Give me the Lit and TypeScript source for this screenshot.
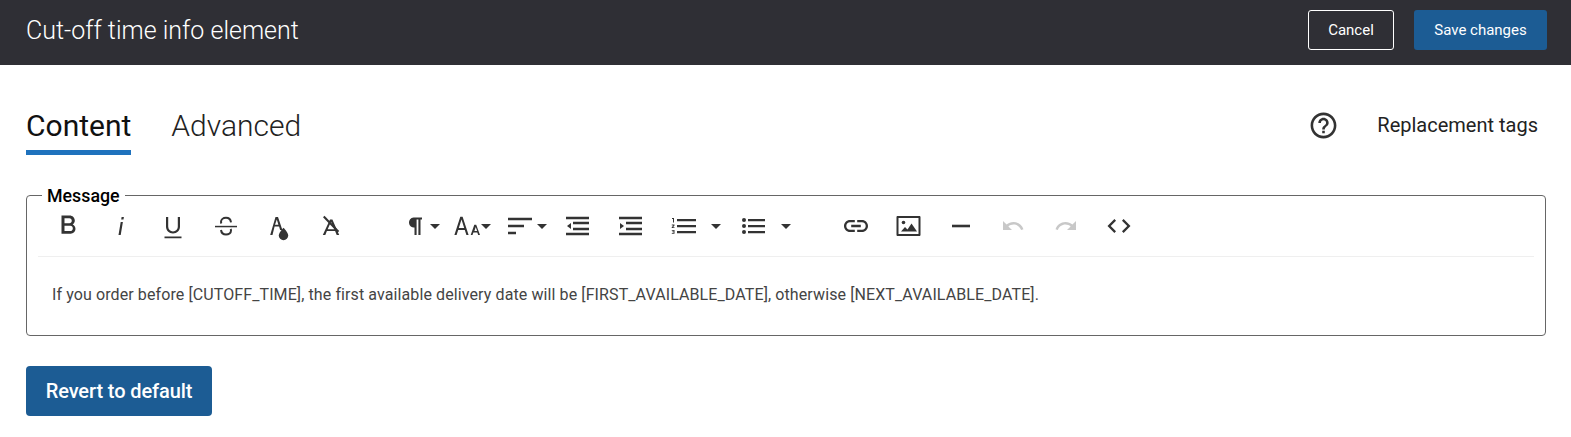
import { LitElement, html, css, svg } from "lit";
import { customElement } from "lit/decorators.js";

const icon = (body: unknown) => html`<svg class="ic" viewBox="0 0 24 24" width="24" height="24">${body}</svg>`;
const caret = html`<svg class="caret" viewBox="0 0 10 5" width="10" height="5"><path d="M0 0h10L5 5z"/></svg>`;

const icons: Record<string, unknown> = {
  bold: svg`<g transform="translate(-3.600 -3.600) scale(1.300)"><path d="M15.6 10.79c.97-.67 1.65-1.77 1.65-2.79 0-2.26-1.75-4-4-4H7v14h7.04c2.09 0 3.71-1.7 3.71-3.79 0-1.52-.86-2.82-2.15-3.42zM9.300 6.100h3.800c1 0 1.800.8 1.800 1.850s-.8 1.850-1.800 1.850H9.300zm4.500 9.800H9.300v-4h4.500c1.100 0 1.900.9 1.900 2s-.8 2-1.900 2z"/></g>`,
  italic: svg`<path d="M11.700 8h2.200l-2.200 13H9.500zM12.600 3h2.300l-.4 2.400h-2.300z"/>`,
  underline: svg`<path d="M12 19.600c4.100 0 7-2.900 7-7V3h-2.200v9.600c0 2.800-2 4.800-4.800 4.800s-4.800-2-4.800-4.800V3H5v9.600c0 4.100 2.900 7 7 7zM3.500 22.400v1.800h17v-1.800z"/>`,
  strike: svg`<path d="M1 11.800h22v1.500H1z"/><path d="M17 8.300C16.600 5.300 14.700 3.800 12 3.800c-2.900 0-5 1.700-5 4 0 .6.100 1.100.400 1.600M7 16c.4 3 2.300 4.500 5 4.500 2.900 0 5-1.700 5-4 0-.6-.1-1.100-.4-1.600" fill="none" stroke="#333" stroke-width="2"/>`,
  color: svg`<path d="M9.500 3h2.500l4.400 13h-2.300l-1-3.400H8.600l-2.100 8.400H4.200zm-.5 7.800h3.400L10.800 5.600z"/><path d="M17.500 13.800s4.700 4.800 4.700 7.700a4.700 4.700 0 0 1-9.400 0c0-2.900 4.700-7.700 4.700-7.700z"/>`,
  clear: svg`<path d="M11 5.500h2.400L20.200 21h-2.500l-1.600-3.900H7.900L6.300 21H3.800zm-2.300 9.800h6.600L12 7.800z"/><path d="M4 3.300l1.500-1.500L20.200 17l-1.500 1.500z"/>`,
  para: svg`<path d="M10.500 3.500h8.500v1.900h-1.500v15.600h-2.100V5.400h-1.800v15.600h-2.100v-7.500a5 5 0 0 1-1-10z"/>`,
  size: svg`<path d="M7.300 2.700h2.300l6 18.300h-2.200l-1.600-5.100H5.200L3.600 21H1.400zm-1.500 11.400h5.400L8.500 5.600z"/><path d="M21.300 10.800h1.900l3.800 10.200h-1.800l-.9-2.600h-3.900l-.9 2.600h-1.800zm.1 6.100h2.700l-1.350-4z"/>`,
  align: svg`<path d="M1 3.800h24v2.400H1zM1 10.800h16v2.400H1zM1 17.800h8v2.400H1z"/>`,
  outdent: svg`<path d="M1 2.800h23v2.400H1zM1 18.800h23v2.400H1zM8 7.800h16v2.400H8zM8 13.800h16v2.400H8z"/><path d="M6 9v6l-4-3z"/>`,
  indent: svg`<path d="M1 2.800h23v2.400H1zM1 18.800h23v2.400H1zM8 7.800h16v2.400H8zM8 13.800h16v2.400H8z"/><path d="M2 9v6l4-3z"/>`,
  ol: svg`<path d="M6 5h19v2.200H6zM6 11h19v2.200H6zM6 17h19v2.200H6z"/><path d="M1 4h2v4.500H2V5H1zM.8 10.500h2.700v.9L2 13.200h1.500v.9H.7v-.8L2.400 11.400H.8zM.8 16h2.700v3.800H.8V19h1.800v-.7H1.300v-.7h1.300v-.8H.8z"/>`,
  ul: svg`<circle cx="3" cy="6" r="2"/><circle cx="3" cy="12" r="2"/><circle cx="3" cy="18" r="2"/><path d="M7 5h17v2.200H7zM7 11h17v2.200H7zM7 17h17v2.200H7z"/>`,
  link: svg`<g transform="translate(-2.400 -2.400) scale(1.200)"><path d="M3.900 12c0-1.710 1.390-3.100 3.100-3.100h4V7H7c-2.760 0-5 2.240-5 5s2.240 5 5 5h4v-1.900H7c-1.710 0-3.100-1.390-3.100-3.100zM8 13h8v-2H8zm9-6h-4v1.900h4c1.710 0 3.100 1.390 3.100 3.100s-1.390 3.100-3.100 3.100h-4V17h4c2.760 0 5-2.240 5-5s-2.240-5-5-5z"/></g>`,
  image: svg`<path fill-rule="evenodd" d="M1.500 2h22c.5 0 1 .5 1 1v18c0 .5-.5 1-1 1h-22c-.5 0-1-.5-1-1V3c0-.5.5-1 1-1zm1 2.100v15.800h20V4.100z"/><circle cx="7.500" cy="8.500" r="1.800"/><path d="M5 17.500l4-4.500 2.500 2.500 4-6 5.500 8z"/>`,
  hr: svg`<path d="M3 10.700h18v2.600H3z"/>`,
  undo: svg`<path class="off" d="M12.500 8c-2.650 0-5.050 1-6.900 2.600L2 7v9h9l-3.620-3.620c1.390-1.160 3.160-1.880 5.120-1.880 3.540 0 6.550 2.310 7.600 5.500l2.370-.78C21.080 11.030 17.150 8 12.500 8z"/>`,
  redo: svg`<path class="off" d="M18.400 10.600C16.550 9 14.150 8 11.500 8c-4.650 0-8.580 3.030-9.960 7.220L3.900 16c1.050-3.190 4.050-5.500 7.600-5.500 1.950 0 3.730.72 5.120 1.880L13 16h9V7z"/>`,
  code: svg`<g transform="translate(-1.800 -1.800) scale(1.150)"><path d="M9.400 16.600L4.800 12l4.600-4.600L8 6l-6 6 6 6zM14.600 16.600l4.600-4.600-4.600-4.600L16 6l6 6-6 6z"/></g>`,
};

const btn = (name: string, extra = "") =>
  html`<span class="tool ${extra}">${icon(icons[name])}${extra && extra !== "mid" ? caret : null}</span>`;

@customElement("app-root")
export class AppRoot extends LitElement {
  static styles = css`
    :host { display: block; font-family: Roboto, "Liberation Sans", sans-serif; background: #fff; height: 437px; overflow: hidden; color: #111; }
    .bar { height: 65px; box-sizing: border-box; background: #2f2f35; display: flex; align-items: center; justify-content: space-between; padding: 0 24px 5px 26px; }
    .title { color: #fff; font-size: 25px; font-weight: 300; }
    .actions { display: flex; gap: 20px; }
    .btn { height: 40px; box-sizing: border-box; display: flex; align-items: center; justify-content: center; border-radius: 3px; color: #fff; font-size: 15px; font-weight: 400; }
    .cancel { width: 86px; border: 1px solid #fff; }
    .save { width: 133px; background: #1c5c94; }
    .tabs { display: flex; align-items: flex-start; padding: 40px 26px 0; height: 121px; box-sizing: border-box; }
    .tab { font-size: 30px; font-weight: 300; line-height: 42px; height: 50px; box-sizing: border-box; margin-right: 40px; color: #222; }
    .tab.on { color: #111; font-weight: 400; border-bottom: 5px solid #1f72bd; }
    .right { margin-left: auto; display: flex; align-items: center; height: 40px; margin-right: 7px; }
    .help { width: 31px; height: 31px; fill: #333; margin-right: 38px; }
    .tags { font-size: 20px; color: #222; }
    fieldset { margin: 0 25px 0 26px; padding: 0 11px; border: 1px solid #666; border-radius: 4px; height: 150px; box-sizing: border-box; min-width: 0; }
    legend { font-size: 17.800px; font-weight: 500; color: #000; padding: 0 5px; margin-left: 4px; line-height: 19px; }
    .toolbar { display: flex; align-items: center; height: 46px; padding: 0 0 7px 3.500px; border-bottom: 1px solid #efefef; margin-top: -2px; }
    .tool { width: 52.600px; height: 24px; padding-left: 14.500px; box-sizing: border-box; display: flex; align-items: center; flex: none; }
    .mid { width: 53px; }
    .c3 { width: 50px; gap: 3px; }
    .c5 { width: 54px; gap: 4px; }
    .c7 { width: 58px; gap: 6px; }
    .c16 { width: 70px; gap: 16px; }
    .ic { fill: #333; flex: none; overflow: visible; }
    .off { fill: #c8c8c8; }
    .caret { fill: #333; flex: none; }
    .g { width: 31px; flex: none; }
    .g2 { width: 33px; flex: none; }
    .msg { font-size: 16px; line-height: 20px; letter-spacing: .1px; color: #444; padding: 28px 14px 0; }
    .revert { margin: 30px 0 0 26px; width: 186px; height: 50px; background: #1c5c94; color: #fff; font-size: 20px; font-weight: 500; letter-spacing: -.1px; border-radius: 4px; display: flex; align-items: center; justify-content: center; }
  `;

  render() {
    return html`
      <div class="bar">
        <div class="title">Cut-off time info element</div>
        <div class="actions"><div class="btn cancel">Cancel</div><div class="btn save">Save changes</div></div>
      </div>
      <div class="tabs">
        <div class="tab on">Content</div>
        <div class="tab">Advanced</div>
        <div class="right">
          <svg class="help" viewBox="0 0 24 24"><path d="M11 18h2v-2h-2v2zm1-16C6.480 2 2 6.480 2 12s4.480 10 10 10 10-4.480 10-10S17.520 2 12 2zm0 18c-4.410 0-8-3.590-8-8s3.590-8 8-8 8 3.590 8 8-3.590 8-8 8zm0-14c-2.210 0-4 1.790-4 4h2c0-1.100.9-2 2-2s2 .9 2 2c0 2-3 1.750-3 5h2c0-2.250 3-2.500 3-5 0-2.210-1.790-4-4-4z"/></svg>
          <span class="tags">Replacement tags</span>
        </div>
      </div>
      <fieldset>
        <legend>Message</legend>
        <div class="toolbar">
          ${btn("bold")}${btn("italic")}${btn("underline")}${btn("strike")}${btn("color")}${btn("clear")}
          <span class="g"></span>
          ${btn("para", "c3")}${btn("size", "c5")}${btn("align", "c7")}${btn("outdent", "mid")}${btn("indent", "mid")}
          ${btn("ol", "c16")}${btn("ul", "c16")}
          <span class="g2"></span>
          ${btn("link")}${btn("image")}${btn("hr")}${btn("undo")}${btn("redo")}${btn("code")}
        </div>
        <div class="msg">If you order before [CUTOFF_TIME], the first available delivery date will be [FIRST_AVAILABLE_DATE], otherwise [NEXT_AVAILABLE_DATE].</div>
      </fieldset>
      <div class="revert">Revert to default</div>
    `;
  }
}
